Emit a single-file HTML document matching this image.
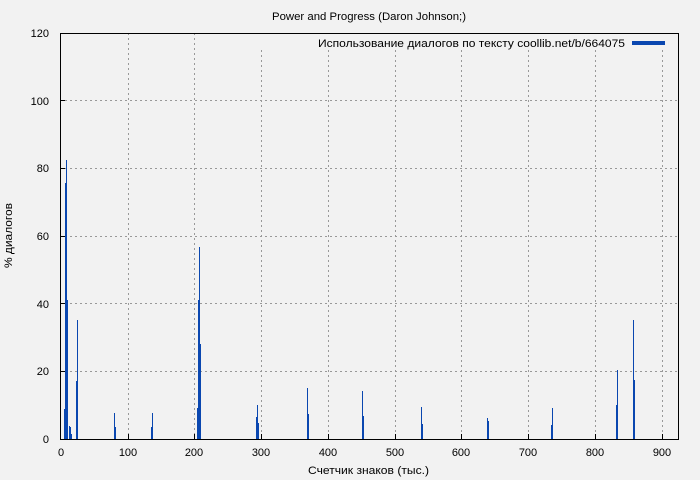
<!DOCTYPE html>
<html><head><meta charset="utf-8"><style>html,body{margin:0;padding:0;background:#f2f2f2}svg{display:block}text{font-family:"Liberation Sans","DejaVu Sans",sans-serif;font-size:11px;fill:#000}</style></head><body>
<svg width="700" height="480" xmlns="http://www.w3.org/2000/svg">
<rect width="700" height="480" fill="#f2f2f2"/>
<g stroke="#999" stroke-width="1" stroke-dasharray="2,3" shape-rendering="crispEdges">
<line x1="60" x2="678" y1="371.5" y2="371.5"/><line x1="60" x2="678" y1="303.5" y2="303.5"/><line x1="60" x2="678" y1="236.5" y2="236.5"/><line x1="60" x2="678" y1="168.5" y2="168.5"/><line x1="60" x2="678" y1="100.5" y2="100.5"/>
<line x1="128.5" x2="128.5" y1="33" y2="439"/><line x1="194.5" x2="194.5" y1="33" y2="439"/><line x1="261.5" x2="261.5" y1="50" y2="439"/><line x1="328.5" x2="328.5" y1="50" y2="439"/><line x1="395.5" x2="395.5" y1="50" y2="439"/><line x1="461.5" x2="461.5" y1="50" y2="439"/><line x1="528.5" x2="528.5" y1="50" y2="439"/><line x1="595.5" x2="595.5" y1="50" y2="439"/><line x1="662.5" x2="662.5" y1="50" y2="439"/>
</g>
<g fill="#0a47b0" shape-rendering="crispEdges">
<rect x="64" y="409" width="1" height="30"/><rect x="65" y="183" width="1" height="256"/><rect x="66" y="160" width="1" height="279"/><rect x="67" y="300" width="1" height="139"/>
<rect x="69" y="426" width="1" height="13"/><rect x="70" y="427" width="1" height="12"/><rect x="71" y="434" width="1" height="5"/>
<rect x="76" y="381" width="1" height="58"/><rect x="77" y="320" width="1" height="119"/>
<rect x="114" y="413" width="1" height="26"/><rect x="115" y="427" width="1" height="12"/>
<rect x="151" y="427" width="1" height="12"/><rect x="152" y="413" width="1" height="26"/>
<rect x="197" y="408" width="1" height="31"/><rect x="198" y="300" width="1" height="139"/><rect x="199" y="247" width="1" height="192"/><rect x="200" y="344" width="1" height="95"/>
<rect x="256" y="417" width="1" height="22"/><rect x="257" y="405" width="1" height="34"/><rect x="258" y="423" width="1" height="16"/>
<rect x="307" y="388" width="1" height="51"/><rect x="308" y="414" width="1" height="25"/>
<rect x="362" y="391" width="1" height="48"/><rect x="363" y="416" width="1" height="23"/>
<rect x="421" y="407" width="1" height="32"/><rect x="422" y="424" width="1" height="15"/>
<rect x="487" y="418" width="1" height="21"/><rect x="488" y="421" width="1" height="18"/>
<rect x="551" y="425" width="1" height="14"/><rect x="552" y="408" width="1" height="31"/>
<rect x="616" y="405" width="1" height="34"/><rect x="617" y="370" width="1" height="69"/>
<rect x="633" y="320" width="1" height="119"/><rect x="634" y="380" width="1" height="59"/>
<rect x="632" y="41" width="33" height="4"/>
</g>
<rect x="60.5" y="33.5" width="618" height="406" fill="none" stroke="#000" stroke-width="1" shape-rendering="crispEdges"/>
<g stroke="#000" shape-rendering="crispEdges">
<line x1="128.5" x2="128.5" y1="439" y2="434"/><line x1="194.5" x2="194.5" y1="439" y2="434"/><line x1="261.5" x2="261.5" y1="439" y2="434"/><line x1="328.5" x2="328.5" y1="439" y2="434"/><line x1="395.5" x2="395.5" y1="439" y2="434"/><line x1="461.5" x2="461.5" y1="439" y2="434"/><line x1="528.5" x2="528.5" y1="439" y2="434"/><line x1="595.5" x2="595.5" y1="439" y2="434"/><line x1="662.5" x2="662.5" y1="439" y2="434"/>
<line x1="60" x2="65" y1="371.5" y2="371.5"/><line x1="60" x2="65" y1="303.5" y2="303.5"/><line x1="60" x2="65" y1="236.5" y2="236.5"/><line x1="60" x2="65" y1="168.5" y2="168.5"/><line x1="60" x2="65" y1="100.5" y2="100.5"/>
</g>
<g text-anchor="end">
<text x="49" y="443">0</text><text x="49" y="375">20</text><text x="49" y="308">40</text><text x="49" y="240">60</text><text x="49" y="172">80</text><text x="49" y="105">100</text><text x="49" y="37">120</text>
</g>
<g text-anchor="middle">
<text x="61" y="456">0</text><text x="128" y="456">100</text><text x="194" y="456">200</text><text x="261" y="456">300</text><text x="328" y="456">400</text><text x="395" y="456">500</text><text x="461" y="456">600</text><text x="528" y="456">700</text><text x="595" y="456">800</text><text x="662" y="456">900</text>
</g>
<text x="272" y="20" textLength="194" lengthAdjust="spacingAndGlyphs">Power and Progress (Daron Johnson;)</text>
<text x="308" y="474" textLength="121" lengthAdjust="spacingAndGlyphs">Счетчик знаков (тыс.)</text>
<text transform="translate(12,268) rotate(-90)" textLength="65" lengthAdjust="spacingAndGlyphs">% диалогов</text>
<text x="318" y="47" textLength="307" lengthAdjust="spacingAndGlyphs">Использование диалогов по тексту coollib.net/b/664075</text>
</svg>
</body></html>
